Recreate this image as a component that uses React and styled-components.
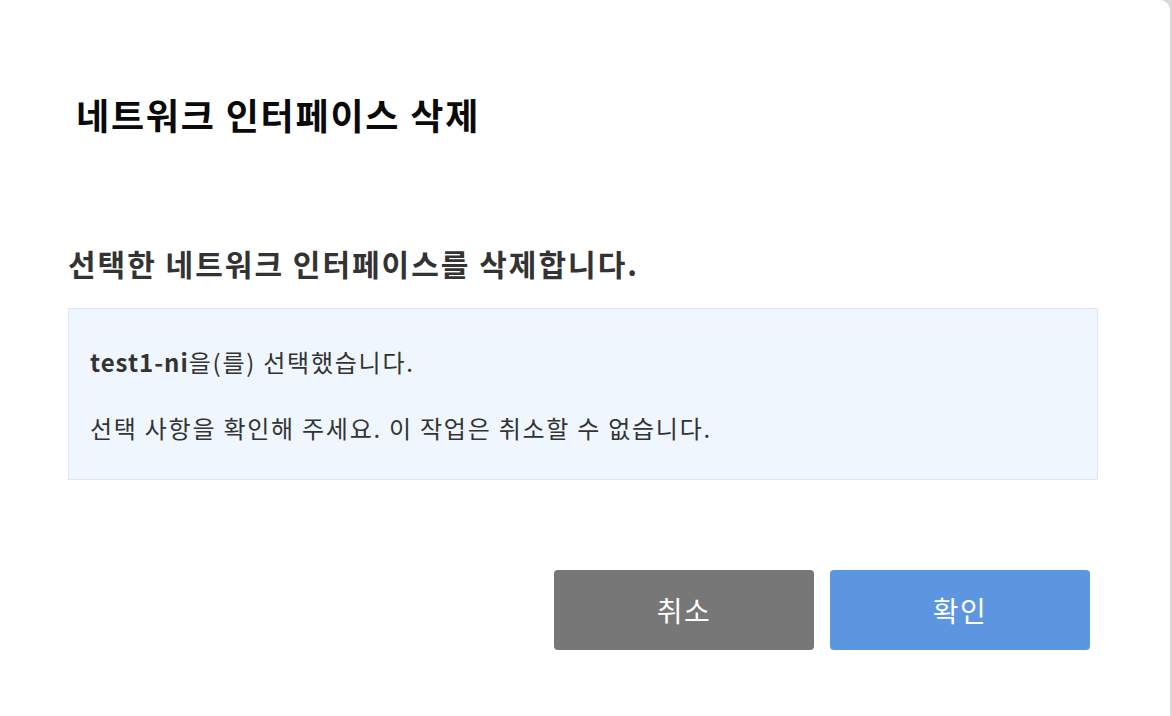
import React from 'react'
import styled, { createGlobalStyle } from 'styled-components'

const GlobalStyle = createGlobalStyle`
    html, body {
        margin: 0;
        padding: 0;
        background: #d8d8d8;
        overflow: hidden;
    }

    body {
        font-family: "Noto Sans CJK KR", "Noto Sans", sans-serif;
    }
`;

function App() {
    const selected = 'test1-ni'

    return (
        <>
            <GlobalStyle />
            <ModalStyled>
                <header className="modal-header">
                    <h2>네트워크 인터페이스 삭제</h2>
                </header>

                <section className="modal-body">
                    <h3>선택한 네트워크 인터페이스를 삭제합니다.</h3>
                    <InfoBox>
                        <p><strong>{selected}</strong>을(를) 선택했습니다.</p>
                        <p>선택 사항을 확인해 주세요. 이 작업은 취소할 수 없습니다.</p>
                    </InfoBox>
                </section>

                <footer className="modal-footer">
                    <Button $variant="cancel">취소</Button>
                    <Button $variant="confirm">확인</Button>
                </footer>
            </ModalStyled>
        </>
    )
}

const ModalStyled = styled.div`
    width: calc(100vw - 2px);
    height: 100vh;
    background: #ffffff;
    border-top-right-radius: 10px;
    box-sizing: border-box;
    display: flex;
    flex-direction: column;

    .modal-header {
        padding: 92px 76px 0;

        h2 {
            margin: 0;
            font-size: 36px;
            line-height: 44px;
            font-weight: 700;
            letter-spacing: 1.8px;
            color: #0a0a0a;
        }
    }

    .modal-body {
        padding: 109px 72px 0 68px;

        h3 {
            margin: 0 0 27px;
            font-size: 30px;
            line-height: 36px;
            font-weight: 700;
            letter-spacing: 2px;
            color: #333333;
        }
    }

    .modal-footer {
        margin-top: 90px;
        padding-right: 80px;
        display: flex;
        justify-content: flex-end;
        gap: 16px;
    }
`;

const InfoBox = styled.div`
    background: #eff6fe;
    border: 1px solid #dbe7f5;
    padding: 37px 22px 35px 21px;
    display: flex;
    flex-direction: column;
    gap: 34px;

    p {
        margin: 0;
        font-size: 24px;
        line-height: 32px;
        letter-spacing: 1.75px;
        color: #333333;
    }

    strong {
        font-weight: 700;
        letter-spacing: 1px;
    }
`;

const Button = styled.button`
    width: 260px;
    height: 80px;
    border: none;
    border-radius: 4px;
    background: ${({ $variant }) => ($variant === 'confirm' ? '#5c96e0' : '#777777')};
    color: #ffffff;
    font-family: "Noto Sans CJK KR", "Noto Sans", sans-serif;
    font-size: 28px;
    font-weight: 400;
    letter-spacing: 1.5px;
    cursor: pointer;
    display: flex;
    align-items: center;
    justify-content: center;
`;

export default App
